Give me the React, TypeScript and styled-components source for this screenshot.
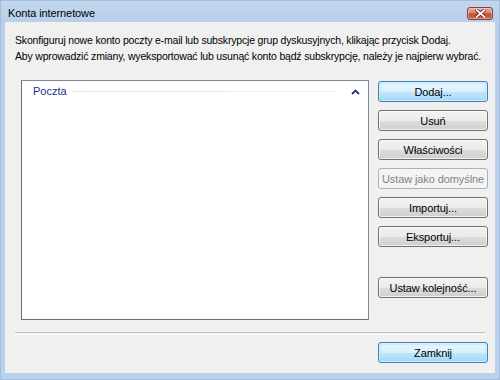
import { ReactElement, ReactNode } from "react";
import styled, { createGlobalStyle, css } from "styled-components";

const GlobalStyle = createGlobalStyle`
  html, body {
    margin: 0;
    padding: 0;
    background: #ffffff;
  }
  body {
    font-family: "Liberation Sans", Arial, sans-serif;
    font-size: 11px;
    color: #000000;
  }
`;

const Window = styled.div`
  width: 500px;
  height: 380px;
  box-sizing: border-box;
  display: flex;
  flex-direction: column;
  background: linear-gradient(180deg, #c3d7ee 0px, #b7cfea 22px, #b9d1ea 100%);
  border: 1px solid #a3bddb;
`;

const TitleBar = styled.div`
  height: 21px;
  display: flex;
  justify-content: space-between;
  align-items: flex-start;
  padding-left: 7px;
  padding-right: 6px;
`;

const TitleText = styled.span`
  margin-top: 6px;
  font-size: 11px;
  letter-spacing: -0.1px;
  color: #000000;
`;

const CloseButton = styled.button`
  margin-top: 6px;
  width: 26px;
  height: 13px;
  padding: 0;
  display: flex;
  align-items: center;
  justify-content: center;
  border: 1px solid #8c3e37;
  border-radius: 3px;
  background: linear-gradient(180deg, #e8a99c 0%, #d7816f 45%, #c24a32 55%, #d06c52 100%);
  box-shadow: inset 0 0 0 1px rgba(255, 255, 255, 0.35);
`;

const Client = styled.div`
  flex: 1;
  margin: 0 4px 6px 4px;
  background: #f0f0f0;
  display: flex;
  flex-direction: column;
`;

const Intro = styled.p`
  margin: 0;
  padding: 10px 10px 0 10px;
  line-height: 16px;
  height: 32px;
  font-size: 10.5px;
  letter-spacing: -0.18px;
  white-space: nowrap;
`;

const MainRow = styled.div`
  display: flex;
  align-items: flex-start;
  gap: 9px;
  padding: 16px 7px 0 16px;
`;

const ListBox = styled.div`
  width: 348px;
  height: 240px;
  box-sizing: border-box;
  background: #ffffff;
  border: 1px solid #828790;
  border-bottom-color: #6e6e6e;
  border-left-color: #6e6e6e;
  padding: 2px 8px 0 11px;
`;

const GroupHeader = styled.div`
  display: flex;
  align-items: center;
  gap: 5px;
  height: 16px;
  color: #1e3287;
`;

const GroupLine = styled.div`
  flex: 1;
  height: 1px;
  background: linear-gradient(90deg, #e3e7f2, #eef0f7);
  margin-top: 1px;
`;

const Chevron = styled.svg`
  margin-left: 10px;
  margin-top: 1px;
`;

const ButtonColumn = styled.div`
  display: flex;
  flex-direction: column;
  gap: 8px;
  padding-top: 1px;
`;

const Spacer = styled.div<{ $h: number }>`
  height: ${(p) => p.$h}px;
`;

const Button = styled.button<{ $primary?: boolean }>`
  width: 110px;
  height: 21px;
  box-sizing: border-box;
  padding: 0;
  white-space: nowrap;
  font-family: inherit;
  font-size: 11px;
  letter-spacing: -0.1px;
  color: #000000;
  border: 1px solid #707070;
  border-radius: 3px;
  background: linear-gradient(180deg, #f2f2f2 0%, #ebebeb 50%, #dddddd 51%, #cfcfcf 100%);
  box-shadow: inset 0 0 0 1px rgba(255, 255, 255, 0.7);
  ${(p) =>
    p.$primary &&
    css`
      border-color: #3c7fb1;
      background: linear-gradient(180deg, #eaf6fd 0%, #d9f0fc 50%, #bee6fd 51%, #a7d9f5 100%);
      box-shadow: inset 0 0 0 1px rgba(255, 255, 255, 0.6), inset 0 0 2px 1px #8fd0f5;
    `}
  &:disabled {
    color: #838383;
    border-color: #adb2b5;
    background: #f4f4f4;
    box-shadow: none;
  }
`;

const Separator = styled.div`
  margin: 12px 10px 0 10px;
  height: 1px;
  border-top: 1px solid #c0c0c0;
  border-bottom: 1px solid #ffffff;
`;

const Footer = styled.div`
  display: flex;
  justify-content: flex-end;
  padding: 7px 7px 0 0;
`;

function ListButton({
  children,
  primary,
  disabled,
}: {
  children: ReactNode;
  primary?: boolean;
  disabled?: boolean;
}) {
  return (
    <Button $primary={primary} disabled={disabled}>
      {children}
    </Button>
  );
}

export default function App(): ReactElement {
  return (
    <>
      <GlobalStyle />
      <Window>
        <TitleBar>
          <TitleText>Konta internetowe</TitleText>
          <CloseButton aria-label="Zamknij">
            <svg width="11" height="9" viewBox="0 0 11 9">
              <path
                d="M1.5 1 L9.5 8 M9.5 1 L1.5 8"
                stroke="#5b1f17"
                strokeWidth="3.4"
                strokeLinecap="square"
              />
              <path
                d="M1.5 1 L9.5 8 M9.5 1 L1.5 8"
                stroke="#ffffff"
                strokeWidth="1.8"
                strokeLinecap="square"
              />
            </svg>
          </CloseButton>
        </TitleBar>
        <Client>
          <Intro>
            Skonfiguruj nowe konto poczty e-mail lub subskrypcje grup dyskusyjnych, klikając przycisk Dodaj.
            <br />
            Aby wprowadzić zmiany, wyeksportować lub usunąć konto bądź subskrypcję, należy je najpierw wybrać.
          </Intro>
          <MainRow>
            <ListBox>
              <GroupHeader>
                <span>Poczta</span>
                <GroupLine />
                <Chevron width="9" height="6" viewBox="0 0 9 6">
                  <path d="M1 5 L4.5 1.5 L8 5" fill="none" stroke="#1e3287" strokeWidth="1.8" />
                </Chevron>
              </GroupHeader>
            </ListBox>
            <ButtonColumn>
              <ListButton primary>Dodaj...</ListButton>
              <ListButton>Usuń</ListButton>
              <ListButton>Właściwości</ListButton>
              <ListButton disabled>Ustaw jako domyślne</ListButton>
              <ListButton>Importuj...</ListButton>
              <ListButton>Eksportuj...</ListButton>
              <Spacer $h={14} />
              <ListButton>Ustaw kolejność...</ListButton>
            </ButtonColumn>
          </MainRow>
          <Separator />
          <Footer>
            <ListButton primary>Zamknij</ListButton>
          </Footer>
        </Client>
      </Window>
    </>
  );
}
